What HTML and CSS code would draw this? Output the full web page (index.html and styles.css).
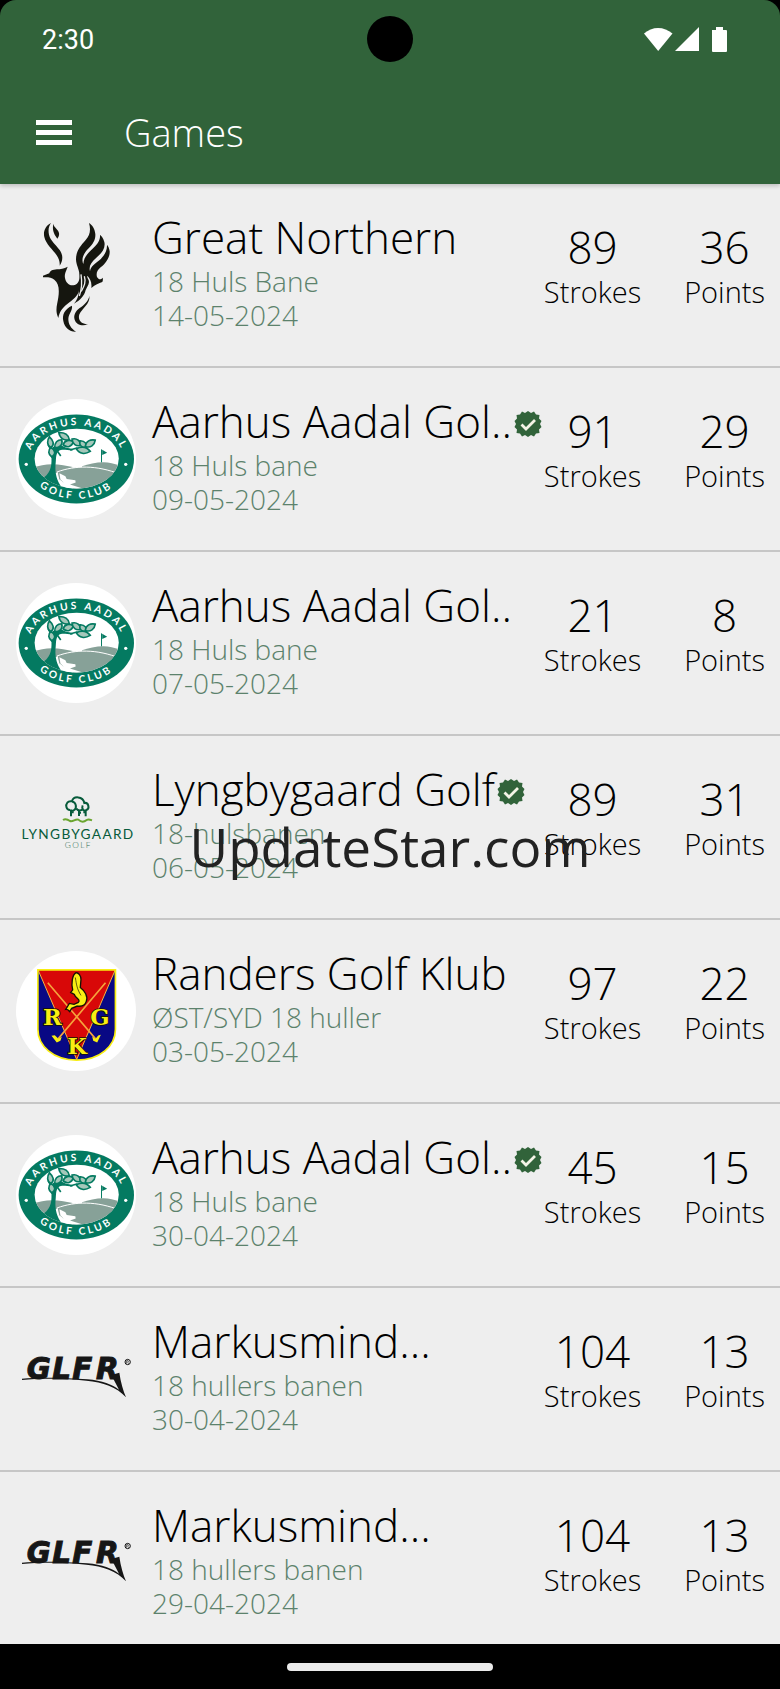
FILE: index.html
```html
<!DOCTYPE html>
<html lang="en">
<head>
    <meta charset="UTF-8">
    <meta name="viewport" content="width=device-width, initial-scale=1.0">
    <title>Games</title>
    <link rel="stylesheet" href="styles.css">
</head>
<body>
    <header>
        <div class="status-bar">
            <span class="time">2:30</span>
            <svg class="status-icons" width="84" height="26" viewBox="0 0 84 26" fill="#fff" aria-hidden="true">
                <path d="M0 6.500C8-1 20-1 28.500 6.500L14.200 24Z"/>
                <path d="M31 24H55V0Z"/>
                <path d="M68 3H72V0H79V3H82Q83 3 83 4V24Q83 25 82 25H69Q68 25 68 24Z"/>
            </svg>
            <span class="camera"></span>
        </div>
        <div class="toolbar">
            <button class="menu-btn" aria-label="Open menu"><span></span><span></span><span></span></button>
            <h1>Games</h1>
        </div>
    </header>

    <main>
        <ul class="games">
            <li class="game">
                <svg class="logo" viewBox="48 75 360 360" aria-hidden="true">
                    <g fill="#15160f">
                        <path d="M153 99C136 108 129 124 133 141C138 163 158 178 170 196C177 207 180 216 179 227C190 211 189 194 179 180C168 164 151 152 147 134C144 120 146 109 153 99Z"/>
                        <path d="M160 101C157 117 159 128 172 146C181 134 178 125 169 116C163 110 161 106 160 101Z"/>
                        <path d="M267 99C273 119 270 135 257 150C241 168 228 183 228 208C228 225 238 238 238 254C239 269 237 280 224 285C208 290 197 277 195 264C193 254 196 248 203 230C192 237 181 237 171 238C157 239 151 242 148 250L129 257V262C143 261 154 262 163 269C177 280 178 299 175 322C172 345 164 359 175 384C178 366 188 353 201 343C219 329 234 319 237 301C236 319 231 331 222 341C240 331 253 318 257 300C261 291 266 286 267 276C267 267 260 264 262 257C270 265 276 276 274 294C286 284 296 280 307 276C309 272 309 267 308 263C302 270 297 270 291 261C288 250 291 241 302 232C319 219 330 201 329 184C328 174 324 168 321 164C322 184 311 199 298 211C285 221 272 230 270 244C266 228 273 217 289 203C307 188 317 174 313 156C310 145 305 138 300 134C302 151 291 164 277 177C262 191 251 203 250 222C243 207 251 190 266 175C279 162 287 149 286 132C284 114 276 105 267 99Z"/>
                        <path d="M216 347C194 357 186 374 190 393C194 414 209 426 228 425C213 416 205 402 205 387C206 370 218 363 216 347Z"/>
                        <path d="M268 317C266 333 252 345 239 354C226 364 220 376 224 389C229 404 246 410 264 403C249 403 239 396 237 385C235 370 246 362 256 349C264 339 270 329 268 317Z"/>
                    </g>
                    <g fill="none" stroke="#eee" stroke-width="4">
                        <path d="M243 253C246 272 248 291 238 318"/>
                        <path d="M253 259C259 277 252 289 244 304"/>
                    </g>
                </svg>
                <div class="info">
                    <h2>Great Northern</h2>
                    <p>18 Huls Bane</p>
                    <p>14-05-2024</p>
                </div>
                <div class="stat strokes"><b>89</b><span>Strokes</span></div>
                <div class="stat"><b>36</b><span>Points</span></div>
            </li>
            <li class="game">
                <svg class="logo" viewBox="46 57 362 362" aria-hidden="true">
                    <defs>
                        <path id="arc-top" d="M86 258V238A142 102 0 0 1 370 238V258"/>
                        <path id="arc-bottom" d="M73 218V238A155 120 0 0 0 383 238V218"/>
                        <clipPath id="aarhus-view"><ellipse cx="229" cy="237" rx="127" ry="90"/></clipPath>
                    </defs>
                    <g id="logo-aarhus">
                        <circle cx="227" cy="238" r="181" fill="#fff"/>
                        <ellipse cx="228" cy="238" rx="174" ry="134" fill="#047a61"/>
                        <ellipse cx="229" cy="237" rx="127" ry="90" fill="#fff"/>
                        <g clip-path="url(#aarhus-view)">
                            <path d="M245 260C280 248 330 240 360 262V300H245Z" fill="#87a198"/>
                            <path d="M98 266C125 250 180 250 220 265L190 280H98Z" fill="#87a198"/>
                            <path d="M170 277C225 257 290 256 360 284V330H220L175 300Z" fill="#87a198" stroke="#fff" stroke-width="3"/>
                            <path d="M98 275H160V330H98Z" fill="#87a198"/>
                            <path d="M177 281L195 290L199 298L225 302L226 309L209 315L250 328H196L190 309L180 300Z" fill="#fff"/>
                            <path d="M121 300C149 283 154 264 153 235C152 218 147 205 141 197L146 193L154 206C165 192 182 196 195 203L217 208L216 213C198 211 184 208 176 213C164 222 168 240 165 257C164 286 170 302 183 323L160 317C151 308 136 299 121 300Z" fill="#047a61"/>
                        </g>
                        <path d="M304 209V248" stroke="#047a61" stroke-width="3"/>
                        <path d="M306 210L321 219L306 226Z" fill="#047a61"/>
                        <g fill="#a5c7ba" stroke="#047a61" stroke-width="5">
                            <path d="M147 171C158 181 164 195 151 203C139 197 139 182 147 171Z"/>
                            <path d="M151 203C164 210 168 224 154 232C143 224 142 212 151 203Z"/>
                            <path d="M175 158C193 157 205 166 207 180C192 184 178 176 175 158Z"/>
                            <path d="M163 204C162 188 171 180 184 180C188 195 179 204 163 204Z"/>
                            <path d="M188 195C193 181 207 179 219 186C214 201 201 206 188 195Z"/>
                            <path d="M215 178C229 174 242 184 241 197C227 201 217 193 215 178Z"/>
                            <path d="M239 183C253 182 263 194 258 206C244 203 236 197 239 183Z"/>
                            <path d="M255 200C257 184 270 178 285 181C283 196 271 206 255 200Z"/>
                            <path d="M228 207C243 200 259 201 270 215C253 225 237 222 228 207Z"/>
                            <path d="M209 211L232 204M170 213L181 229"/>
                        </g>
                        <g class="aarhus-name">
                            <text><textPath href="#arc-top" startOffset="50%">AARHUS AADAL</textPath></text>
                            <text><textPath href="#arc-bottom" startOffset="50%">GOLF CLUB</textPath></text>
                        </g>
                        <circle cx="77" cy="254" r="5" fill="#fff"/>
                        <circle cx="377" cy="254" r="5" fill="#fff"/>
                    </g>
                </svg>
                <div class="info">
                    <h2>Aarhus Aadal Gol..
                        <svg class="badge" viewBox="0 0 28 28" role="img" aria-label="Verified">
                            <g id="verified">
                                <path d="M14 1L17 3L20 1.500L22 4.500L25.500 5L25 8.500L27.500 11L26 14L27.500 17L25 19.500L25.500 23L22 23.500L20 26.500L17 25L14 27L11 25L8 26.500L6 23.500L2.500 23L3 19.500L.5 17L2 14L.5 11L3 8.500L2.500 5L6 4.500L8 1.500L11 3Z" fill="#31633a"/>
                                <path d="M7.500 14.500L12 19L21 10" fill="none" stroke="#f4f4e6" stroke-width="2.800"/>
                            </g>
                        </svg>
                    </h2>
                    <p>18 Huls bane</p>
                    <p>09-05-2024</p>
                </div>
                <div class="stat strokes"><b>91</b><span>Strokes</span></div>
                <div class="stat"><b>29</b><span>Points</span></div>
            </li>
            <li class="game">
                <svg class="logo" viewBox="46 57 362 362" aria-hidden="true"><use href="#logo-aarhus"/></svg>
                <div class="info">
                    <h2>Aarhus Aadal Gol..</h2>
                    <p>18 Huls bane</p>
                    <p>07-05-2024</p>
                </div>
                <div class="stat strokes"><b>21</b><span>Strokes</span></div>
                <div class="stat"><b>8</b><span>Points</span></div>
            </li>
            <li class="game">
                <svg class="logo" viewBox="48 51 360 360" aria-hidden="true">
                    <g fill="none" stroke="#075b3b" stroke-width="6">
                        <path d="M211 180C198 181 196 165 202 158C205 154 211 153 216 154C220 137 249 138 253 159C266 156 270 177 259 180C251 186 244 176 248 166M216 155C229 155 232 177 221 181C217 183 213 182 211 180M229 176C234 183 246 183 249 176"/>
                        <path d="M213 181V199M237 181V198M257 181V199M213 187H221M237 188H243M250 187H257"/>
                    </g>
                    <path d="M189 210C197 205 203 208 210 213C219 216 226 206 235 209C244 218 253 216 260 210C266 206 271 209 276 211" fill="none" stroke="#6aa52f" stroke-width="6"/>
                    <text x="234" y="267" class="lyngby-name">LYNGBYGAARD</text>
                    <text x="235" y="293" class="lyngby-golf">GOLF</text>
                </svg>
                <div class="info">
                    <h2>Lyngbygaard Golf
                        <svg class="badge" viewBox="0 0 28 28" role="img" aria-label="Verified"><use href="#verified"/></svg>
                    </h2>
                    <p>18-hulsbanen</p>
                    <p>06-05-2024</p>
                </div>
                <div class="stat strokes"><b>89</b><span>Strokes</span></div>
                <div class="stat"><b>31</b><span>Points</span></div>
            </li>
            <li class="game">
                <svg class="logo" viewBox="46 64 362 362" aria-hidden="true">
                    <circle cx="227" cy="245" r="181" fill="#fff"/>
                    <path d="M112 121H346V300C346 350 300 393 229 393C158 393 112 350 112 300Z" fill="#080884"/>
                    <path d="M113 121H345L229 393Z" fill="#d80808"/>
                    <path d="M113 122L229 391L345 122" fill="none" stroke="#f3b63e" stroke-width="3"/>
                    <path d="M112 121H346V300C346 350 300 393 229 393C158 393 112 350 112 300Z" fill="none" stroke="#f8ee12" stroke-width="5"/>
                    <path d="M142 160L286 329M316 160L173 329" fill="none" stroke="#f5a33c" stroke-width="5"/>
                    <path d="M153 320L163 318L174 329L184 323L180 335L169 340ZM302 317L294 319L286 329L276 323L279 335L291 340Z" fill="#f8ee12"/>
                    <path d="M226 130C234 127 243 141 242 150L240 174C253 184 264 201 258 216C254 229 242 232 231 230L214 237L208 247C204 242 203 239 196 240L207 222L221 225L234 219C242 211 226 207 222 195L211 189L217 181C212 160 216 137 226 130Z" fill="#f8ee12" stroke="#171004" stroke-width="4"/>
                    <path d="M225 144C229 168 230 178 242 198" fill="none" stroke="#171004" stroke-width="2"/>
                    <g class="randers-name">
                        <text x="156" y="286">R</text>
                        <text x="299" y="286">G</text>
                        <text x="230" y="375">K</text>
                    </g>
                </svg>
                <div class="info">
                    <h2>Randers Golf Klub</h2>
                    <p>ØST/SYD 18 huller</p>
                    <p>03-05-2024</p>
                </div>
                <div class="stat strokes"><b>97</b><span>Strokes</span></div>
                <div class="stat"><b>22</b><span>Points</span></div>
            </li>
            <li class="game">
                <svg class="logo" viewBox="46 57 362 362" aria-hidden="true"><use href="#logo-aarhus"/></svg>
                <div class="info">
                    <h2>Aarhus Aadal Gol..
                        <svg class="badge" viewBox="0 0 28 28" role="img" aria-label="Verified"><use href="#verified"/></svg>
                    </h2>
                    <p>18 Huls bane</p>
                    <p>30-04-2024</p>
                </div>
                <div class="stat strokes"><b>45</b><span>Strokes</span></div>
                <div class="stat"><b>15</b><span>Points</span></div>
            </li>
            <li class="game">
                <svg class="logo" viewBox="48 -3 360 360" aria-hidden="true">
                    <g id="logo-glfr">
                        <text x="80 157 217 288" y="177" class="glfr-name">GLFR</text>
                        <path d="M66 176C122 171 204 174 262 178C307 182 337 194 357 209L334 165L358 158C362 187 370 213 378 232C350 200 309 187 259 182C186 175 121 175 66 180Z" fill="#161616"/>
                        <circle cx="383" cy="126" r="8" fill="none" stroke="#161616" stroke-width="3"/>
                        <path d="M380 131V122H384Q387 125 383 127L387 131" fill="none" stroke="#161616" stroke-width="2"/>
                    </g>
                </svg>
                <div class="info">
                    <h2>Markusmind...</h2>
                    <p>18 hullers banen</p>
                    <p>30-04-2024</p>
                </div>
                <div class="stat strokes"><b>104</b><span>Strokes</span></div>
                <div class="stat"><b>13</b><span>Points</span></div>
            </li>
            <li class="game">
                <svg class="logo" viewBox="48 -3 360 360" aria-hidden="true"><use href="#logo-glfr"/></svg>
                <div class="info">
                    <h2>Markusmind...</h2>
                    <p>18 hullers banen</p>
                    <p>29-04-2024</p>
                </div>
                <div class="stat strokes"><b>104</b><span>Strokes</span></div>
                <div class="stat"><b>13</b><span>Points</span></div>
            </li>
        </ul>
    </main>

    <footer class="nav-bar"><span></span></footer>
    <div class="watermark">UpdateStar.com</div>
</body>
</html>
```

FILE: styles.css
```css
* {
    box-sizing: border-box;
}
body {
    display: flex;
    flex-direction: column;
    height: 100vh;
    margin: 0;
    background-color: #000;
    color: #000;
    font-family: 'Open Sans', sans-serif;
    font-weight: 300;
    position: relative;
}
header {
    flex: none;
    background-color: #31633a;
    color: #fff;
    border-radius: 16px 16px 0 0;
    box-shadow: 0 2px 4px rgba(0, 0, 0, 0.2);
    position: relative;
    z-index: 1;
}
.status-bar {
    display: flex;
    align-items: center;
    justify-content: space-between;
    height: 80px;
    padding: 0 52px 0 42px;
    position: relative;
}
.time {
    font-family: Roboto, sans-serif;
    font-size: 27px;
    font-weight: 400;
}
.camera {
    position: absolute;
    top: 16px;
    left: 50%;
    width: 46px;
    height: 46px;
    margin-left: -23px;
    border-radius: 50%;
    background-color: #000;
}
.toolbar {
    display: flex;
    align-items: center;
    gap: 52px;
    height: 104px;
    padding: 0 36px;
}
.menu-btn {
    display: flex;
    flex-direction: column;
    gap: 5px;
    width: 36px;
    padding: 0;
    border: none;
    background: none;
    cursor: pointer;
}
.menu-btn span {
    height: 5px;
    background-color: #fff;
}
h1 {
    margin: 0;
    font-size: 38px;
    font-weight: 300;
}
main {
    flex: 1;
    min-height: 0;
    overflow: hidden;
    background-color: #eee;
}
.games {
    margin: 0;
    padding: 0;
    list-style: none;
}
.game {
    display: flex;
    align-items: flex-start;
    padding: 26px 15px 34px 16px;
    border-bottom: 2px solid #c6c6c6;
}
.logo {
    flex: none;
    width: 120px;
    height: 120px;
    margin: 5px 16px -3px 0;
}
.info {
    flex: 1;
    min-width: 0;
    white-space: nowrap;
}
h2 {
    display: flex;
    align-items: center;
    gap: 2px;
    margin: 0;
    font-size: 44px;
    font-weight: 300;
    line-height: 54px;
}
.badge {
    flex: none;
    width: 28px;
    height: 28px;
    margin-top: 6px;
}
.info p {
    margin: 0;
    color: #5c826c;
    font-size: 28px;
    line-height: 34px;
}
.stat {
    display: flex;
    flex-direction: column;
    align-items: center;
    padding-top: 10px;
}
.strokes {
    margin-right: 43px;
}
.stat b {
    font-size: 44px;
    font-weight: 300;
    line-height: 54px;
}
.stat span {
    font-size: 29px;
    line-height: 36px;
}
.nav-bar {
    flex: none;
    display: flex;
    align-items: center;
    justify-content: center;
    height: 45px;
}
.nav-bar span {
    width: 206px;
    height: 8px;
    border-radius: 4px;
    background-color: #ebebeb;
}
.watermark {
    position: absolute;
    top: 50%;
    left: 50%;
    transform: translate(-50%, -50%);
    padding-top: 4px;
    color: #222;
    font-size: 53px;
    font-weight: 400;
    line-height: 72px;
    z-index: 2;
}

/* Lettering inside the logos */
.aarhus-name {
    fill: #fff;
    font-family: Lato, sans-serif;
    font-size: 31px;
    font-weight: 700;
    letter-spacing: 8px;
    text-anchor: middle;
}
.lyngby-name {
    fill: #075b3b;
    font-family: Lato, sans-serif;
    font-size: 41px;
    font-weight: 400;
    letter-spacing: 4px;
    text-anchor: middle;
}
.lyngby-golf {
    fill: #2d6a50;
    font-family: Lato, sans-serif;
    font-size: 25px;
    letter-spacing: 4px;
    text-anchor: middle;
}
.randers-name {
    fill: #f8ee12;
    stroke: #171004;
    stroke-width: 5px;
    paint-order: stroke;
    font-family: 'DejaVu Serif', serif;
    font-size: 68px;
    font-weight: 700;
    text-anchor: middle;
}
.glfr-name {
    fill: #161616;
    stroke: #161616;
    stroke-width: 3px;
    font-family: 'DejaVu Sans', sans-serif;
    font-size: 88px;
    font-style: italic;
    font-weight: 700;
}
```
